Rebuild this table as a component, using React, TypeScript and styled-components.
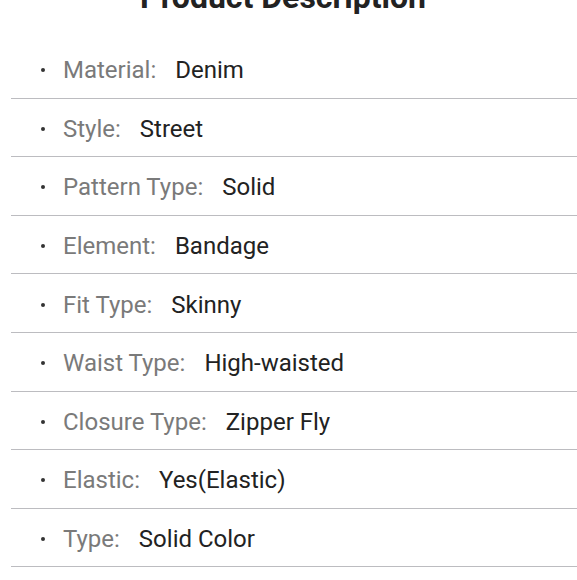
import styled, { createGlobalStyle } from "styled-components";

const GlobalStyle = createGlobalStyle`
  html, body {
    margin: 0;
    padding: 0;
    background: #fff;
  }
  body {
    font-family: Roboto, "Liberation Sans", sans-serif;
    overflow: hidden;
  }
`;

const Page = styled.div`
  width: 577px;
  height: 580px;
  overflow: hidden;
  background: #fff;
`;

const Title = styled.h2`
  width: 566px;
  margin: -22px 0 0;
  height: 62px;
  line-height: 38px;
  text-align: center;
  font-size: 32px;
  font-weight: 700;
  color: #222;
`;

const List = styled.ul`
  list-style: none;
  margin: 0 0 0 11px;
  padding: 0;
`;

const Row = styled.li`
  display: flex;
  align-items: center;
  box-sizing: content-box;
  height: 54.6px;
  padding: 3px 0 0 30px;
  border-bottom: 1px solid #bcbcc0;
  font-size: 24px;
`;

const Dot = styled.span`
  width: 4px;
  height: 4px;
  border-radius: 50%;
  background: #333;
  margin-right: 18px;
  flex-shrink: 0;
`;

const Label = styled.span`
  color: #7a7a7a;
  margin-right: 19px;
`;

const Value = styled.span`
  color: #222;
`;

const specs = [
  ["Material:", "Denim"],
  ["Style:", "Street"],
  ["Pattern Type:", "Solid"],
  ["Element:", "Bandage"],
  ["Fit Type:", "Skinny"],
  ["Waist Type:", "High-waisted"],
  ["Closure Type:", "Zipper Fly"],
  ["Elastic:", "Yes(Elastic)"],
  ["Type:", "Solid Color"],
];

const App = () => {
  return (
    <>
      <GlobalStyle />
      <Page>
        <Title>Product Description</Title>
        <List>
          {specs.map(([label, value]) => (
            <Row key={label}>
              <Dot />
              <Label>{label}</Label>
              <Value>{value}</Value>
            </Row>
          ))}
        </List>
      </Page>
    </>
  );
};

export default App;
